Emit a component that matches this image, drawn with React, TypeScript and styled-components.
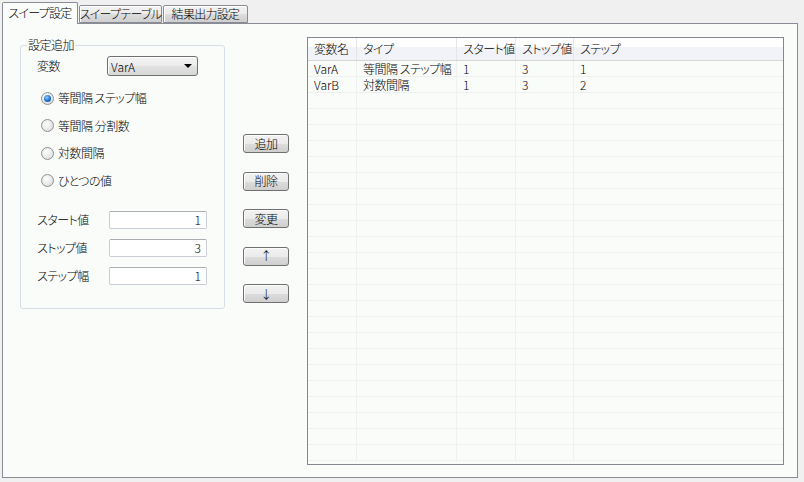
import React from 'react'
import styled, { createGlobalStyle } from 'styled-components'

const GlobalStyle = createGlobalStyle`
  html, body {
    margin: 0;
    padding: 0;
    background: #f0f0f0;
  }
  body {
    font-family: "Noto Sans CJK JP", "Liberation Sans", sans-serif;
    font-size: 12px;
    font-weight: 300;
    font-feature-settings: "palt";
    letter-spacing: -0.5px;
    white-space: nowrap;
    color: #000;
  }
`

const Window = styled.div`
  width: 804px;
  height: 482px;
  padding: 2px 0 0 2px;
  box-sizing: border-box;
`

const TabStrip = styled.div`
  display: flex;
  align-items: flex-end;
  height: 21px;
  position: relative;
  z-index: 1;
`

const Tab = styled.div<{ $active?: boolean; $w: number }>`
  box-sizing: border-box;
  width: ${p => p.$w}px;
  height: ${p => (p.$active ? 22 : 18)}px;
  margin-bottom: ${p => (p.$active ? -1 : 0)}px;
  margin-left: ${p => (p.$active ? 0 : 1)}px;
  border: 1px solid #898c95;
  border-bottom: ${p => (p.$active ? 'none' : '1px solid #898c95')};
  border-radius: 2px 2px 0 0;
  background: ${p =>
    p.$active ? '#fafcfa' : 'linear-gradient(#f2f2f2, #ebebeb 50%, #dddddd 51%, #cfcfcf)'};
  box-shadow: ${p => (p.$active ? 'none' : 'inset 1px 1px 0 #fff')};
  display: flex;
  align-items: center;
  justify-content: center;
  line-height: 14px;
  letter-spacing: -0.7px;
  padding-bottom: ${p => (p.$active ? 2 : 0)}px;
`

const Panel = styled.div`
  box-sizing: border-box;
  width: 796px;
  height: 455px;
  border: 1px solid #898c95;
  background: #fafcfa;
  display: flex;
  align-items: flex-start;
`

const GroupBox = styled.div`
  position: relative;
  box-sizing: border-box;
  width: 205px;
  height: 264px;
  margin: 21px 0 0 17px;
  border: 1px solid #d5dfe5;
  border-radius: 3px;
  display: flex;
  flex-direction: column;
`

const Legend = styled.span`
  position: absolute;
  top: -9px;
  left: 6px;
  padding: 0 1px;
  background: #fafcfa;
  line-height: 16px;
`

const VarRow = styled.div`
  display: flex;
  align-items: center;
  height: 20px;
  margin-top: 10px;
  padding-left: 16px;
`

const VarLabel = styled.span`
  width: 70px;
  line-height: 16px;
`

const Select = styled.div`
  box-sizing: border-box;
  width: 91px;
  height: 20px;
  border: 1px solid #707070;
  border-radius: 3px;
  background: linear-gradient(#f4f4f4, #ececec 50%, #e2e2e2 51%, #d8d8d8);
  box-shadow: inset 1px 1px 0 #fff;
  display: flex;
  align-items: center;
  justify-content: space-between;
  padding: 0 5px 0 3px;
  letter-spacing: 0;
`

const Arrow = styled.span`
  width: 0;
  height: 0;
  border-left: 4px solid transparent;
  border-right: 4px solid transparent;
  border-top: 4px solid #000;
`

const RadioList = styled.div`
  display: flex;
  flex-direction: column;
  gap: 11.5px;
  margin-top: 14px;
  padding-left: 20px;
`

const RadioRow = styled.label`
  display: flex;
  align-items: center;
  height: 16px;
  gap: 4px;
  line-height: 16px;
`

const RadioDot = styled.span<{ $checked?: boolean }>`
  box-sizing: border-box;
  width: 13px;
  height: 13px;
  border-radius: 50%;
  border: 1px solid #8f9092;
  background: radial-gradient(circle at 40% 35%, #ffffff, #e2e2e2 70%, #d4d4d4);
  display: flex;
  align-items: center;
  justify-content: center;
  &::after {
    content: '';
    display: ${p => (p.$checked ? 'block' : 'none')};
    width: 7px;
    height: 7px;
    border-radius: 50%;
    background: radial-gradient(circle at 40% 35%, #8fd0ff, #1b6fcf 55%, #0b3f8a);
  }
`

const FieldList = styled.div`
  display: flex;
  flex-direction: column;
  gap: 10px;
  margin-top: 22px;
  padding-left: 16px;
`

const FieldRow = styled.div`
  display: flex;
  align-items: center;
  height: 18px;
`

const FieldLabel = styled.span`
  width: 72px;
  line-height: 16px;
`

const Input = styled.div`
  box-sizing: border-box;
  width: 98px;
  height: 18px;
  border: 1px solid #c9ced6;
  border-top-color: #abadb3;
  border-radius: 2px;
  background: #fff;
  text-align: right;
  padding-right: 5px;
  letter-spacing: 0;
  line-height: 16px;
`

const ButtonColumn = styled.div`
  display: flex;
  flex-direction: column;
  gap: 18.5px;
  margin: 110px 0 0 18px;
`

const Button = styled.div`
  box-sizing: border-box;
  width: 46px;
  height: 19px;
  border: 1px solid #707070;
  border-radius: 3px;
  background: linear-gradient(#f2f2f2, #ebebeb 50%, #dddddd 51%, #cfcfcf);
  box-shadow: inset 1px 1px 0 #fcfcfc;
  display: flex;
  align-items: center;
  justify-content: center;
  line-height: 14px;
`

const Table = styled.div`
  box-sizing: border-box;
  width: 477px;
  height: 428px;
  margin: 13px 0 0 18px;
  border: 1px solid #828790;
  background: #fafcfa;
  overflow: hidden;
`

const cols = '49px 100px 59px 58px 1fr'

const HeaderRow = styled.div`
  display: grid;
  grid-template-columns: ${cols};
  height: 23px;
  border-bottom: 1px solid #d5d5d5;
  box-sizing: border-box;
  background: linear-gradient(#ffffff 0%, #ffffff 40%, #f1f3f8 41%, #f1f3f8 100%);
`

const HeaderCell = styled.div`
  border-right: 1px solid #e3e5e9;
  padding-left: 6px;
  display: flex;
  align-items: center;
  line-height: 14px;
  overflow: hidden;
  &:last-child {
    border-right: none;
  }
`

const Row = styled.div`
  display: grid;
  grid-template-columns: ${cols};
  height: 16px;
  box-sizing: border-box;
  border-bottom: 1px solid #eff0f0;
`

const Cell = styled.div<{ $latin?: boolean }>`
  border-right: 1px solid #eff0f0;
  padding-left: 6px;
  line-height: 15px;
  overflow: hidden;
  letter-spacing: ${p => (p.$latin ? '0' : '-0.5px')};
  &:last-child {
    border-right: none;
  }
`

const headers = ['変数名', 'タイプ', 'スタート値', 'ストップ値', 'ステップ']

const data = [
  ['VarA', '等間隔 ステップ幅', '1', '3', '1'],
  ['VarB', '対数間隔', '1', '3', '2'],
]

const radios = ['等間隔 ステップ幅', '等間隔 分割数', '対数間隔', 'ひとつの値']

const fields = [
  ['スタート値', '1'],
  ['ストップ値', '3'],
  ['ステップ幅', '1'],
]

const App: React.FC = () => {
  const rows = [...data]
  while (rows.length < 25) rows.push(['', '', '', '', ''])

  return (
    <Window>
      <GlobalStyle />
      <TabStrip>
        <Tab $active $w={76}>スイープ設定</Tab>
        <Tab $w={83}>スイープテーブル</Tab>
        <Tab $w={85}>結果出力設定</Tab>
      </TabStrip>
      <Panel>
        <GroupBox>
          <Legend>設定追加</Legend>
          <VarRow>
            <VarLabel>変数</VarLabel>
            <Select>
              VarA
              <Arrow />
            </Select>
          </VarRow>
          <RadioList>
            {radios.map((r, i) => (
              <RadioRow key={r}>
                <RadioDot $checked={i === 0} />
                {r}
              </RadioRow>
            ))}
          </RadioList>
          <FieldList>
            {fields.map(([label, value]) => (
              <FieldRow key={label}>
                <FieldLabel>{label}</FieldLabel>
                <Input>{value}</Input>
              </FieldRow>
            ))}
          </FieldList>
        </GroupBox>
        <ButtonColumn>
          <Button>追加</Button>
          <Button>削除</Button>
          <Button>変更</Button>
          <Button>↑</Button>
          <Button>↓</Button>
        </ButtonColumn>
        <Table>
          <HeaderRow>
            {headers.map(h => (
              <HeaderCell key={h}>{h}</HeaderCell>
            ))}
          </HeaderRow>
          {rows.map((r, i) => (
            <Row key={i}>
              {r.map((c, j) => (
                <Cell key={j} $latin={j === 0 || j > 1}>{c}</Cell>
              ))}
            </Row>
          ))}
        </Table>
      </Panel>
    </Window>
  )
}

export default App
